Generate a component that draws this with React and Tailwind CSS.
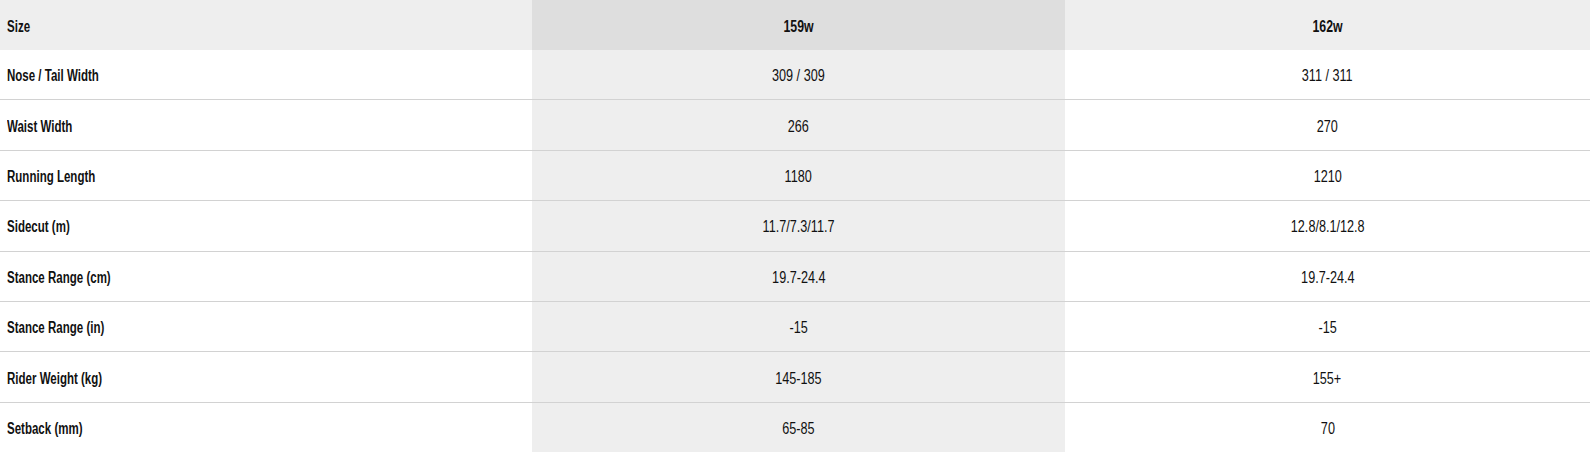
import React from 'react';

const ROWS = [
    ['Nose / Tail Width', '309 / 309', '311 / 311'],
    ['Waist Width', '266', '270'],
    ['Running Length', '1180', '1210'],
    ['Sidecut (m)', '11.7/7.3/11.7', '12.8/8.1/12.8'],
    ['Stance Range (cm)', '19.7-24.4', '19.7-24.4'],
    ['Stance Range (in)', '-15', '-15'],
    ['Rider Weight (kg)', '145-185', '155+'],
    ['Setback (mm)', '65-85', '70'],
];

// no condensed face installed, so squeeze Liberation Sans horizontally
const Label = ({ children }) => (
    <span className="inline-block origin-left scale-x-[0.72] whitespace-nowrap text-[16px] font-bold">{children}</span>
);

const Value = ({ children, bold }) => (
    <span className={`inline-block origin-center whitespace-nowrap text-[16px] ${bold ? 'scale-x-[0.77] font-bold' : 'scale-x-[0.79]'}`}>
        {children}
    </span>
);

export default function App() {
    return (
        <div className="w-full bg-white text-[#111] font-['Liberation_Sans',Arial,sans-serif]">
            <div className="grid h-[50px] grid-cols-[532px_533px_1fr] items-stretch">
                <div className="flex items-center bg-[#eeeeee] pl-[7px] pt-[3px]"><Label>Size</Label></div>
                <div className="flex items-center justify-center bg-[#dedede] pt-[3px]"><Value bold>159w</Value></div>
                <div className="flex items-center justify-center bg-[#eeeeee] pt-[3px]"><Value bold>162w</Value></div>
            </div>

            {ROWS.map(([label, a, b], i) => {
                const last = i === ROWS.length - 1;
                return (
                    <div
                        key={label}
                        className={`grid grid-cols-[532px_533px_1fr] items-stretch ${last ? 'h-[49.4px]' : 'h-[50.4px] border-b border-[#d2d2d2]'}`}
                    >
                        <div className="flex items-center pl-[7px] pt-[3px]"><Label>{label}</Label></div>
                        <div className="flex items-center justify-center bg-[#eeeeee] pt-[3px]"><Value>{a}</Value></div>
                        <div className="flex items-center justify-center pt-[3px]"><Value>{b}</Value></div>
                    </div>
                );
            })}
        </div>
    );
}
